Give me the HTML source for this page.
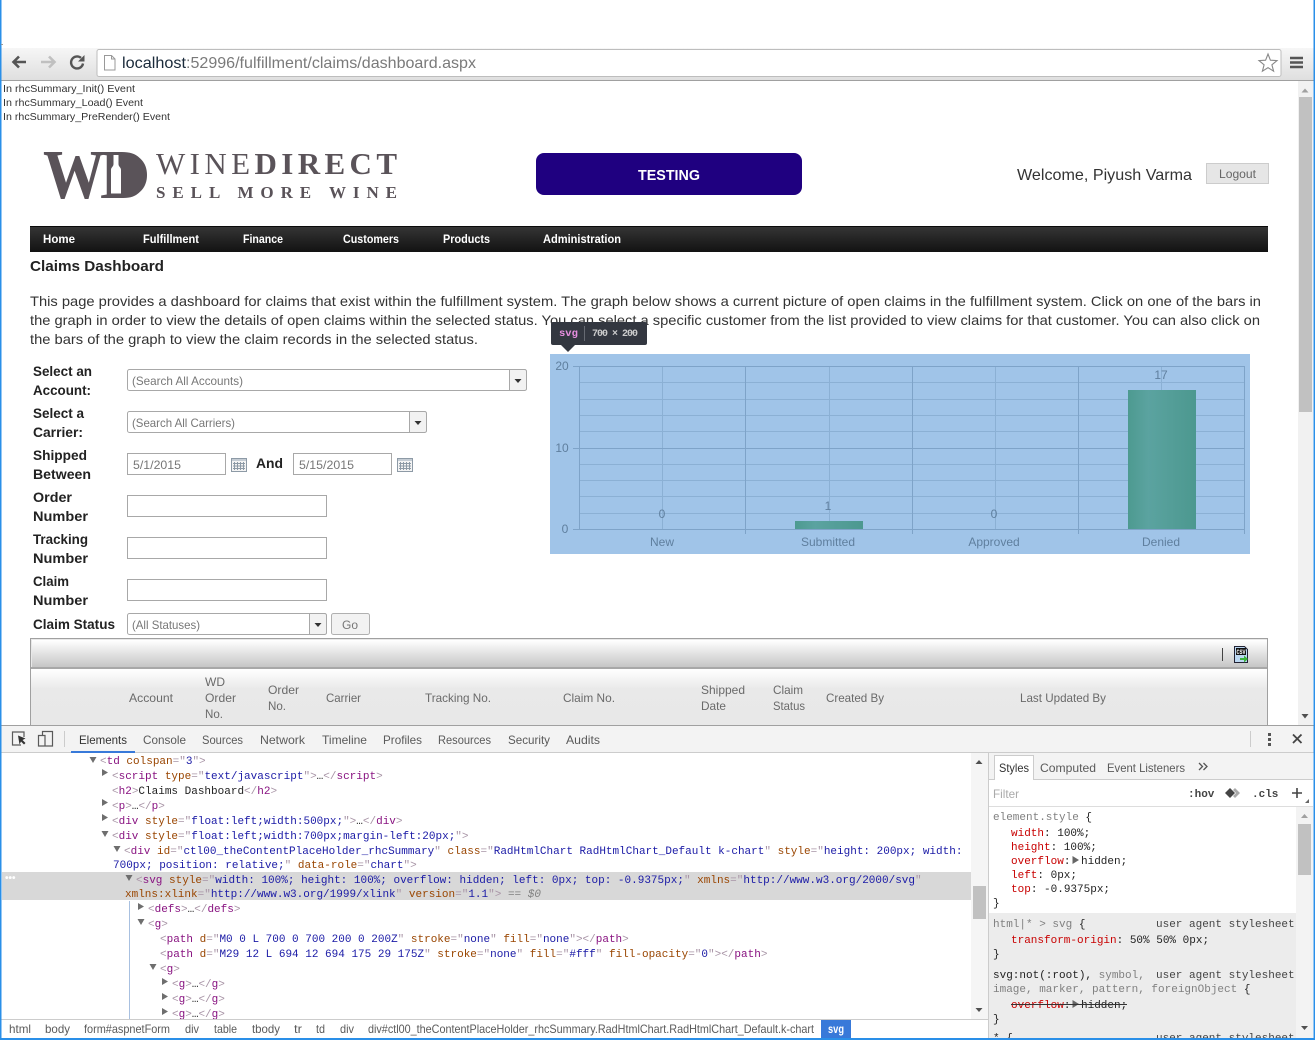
<!DOCTYPE html>
<html lang="en">
<head>
<meta charset="utf-8">
<title>Claims Dashboard</title>
<style>
html,body{margin:0;padding:0;width:1315px;height:1040px;overflow:hidden;background:#fff}
svg{display:block;position:absolute;left:0;top:0}
text{font-family:"Liberation Sans",sans-serif;white-space:pre}
.log{font-size:10.5px;fill:#333}
.nav{font-size:12px;fill:#fff;font-weight:bold;stroke:none}
.p{font-size:14px;fill:#333}
.lb{font-size:14px;font-weight:bold;fill:#222}
.v{font-size:12px;fill:#777}
.h{font-size:12px;fill:#6a6a6a}
.c{font-size:12px;fill:#5f7f9e;text-anchor:middle}
.t{font-size:12px;fill:#5a5a5a}
.m{font-family:"Liberation Mono",monospace;font-size:11px;fill:#222}
.br{fill:#a894a6}.tg{fill:#881280}.at{fill:#994500}.va{fill:#1a1aa6}
.pr{fill:#c80000}.gy{fill:#808080}
</style>
</head>
<body>
<svg width="1315" height="1040" viewBox="0 0 1315 1040" xmlns="http://www.w3.org/2000/svg">
<defs>
<linearGradient id="tb" x1="0" y1="0" x2="0" y2="1"><stop offset="0" stop-color="#f6f6f6"/><stop offset="1" stop-color="#dfdfdf"/></linearGradient>
<linearGradient id="nv" x1="0" y1="0" x2="0" y2="1"><stop offset="0" stop-color="#363636"/><stop offset="1" stop-color="#121212"/></linearGradient>
<linearGradient id="gt" x1="0" y1="0" x2="0" y2="1"><stop offset="0" stop-color="#fff"/><stop offset="1" stop-color="#c6c6c6"/></linearGradient>
<linearGradient id="gh" x1="0" y1="0" x2="0" y2="1"><stop offset="0" stop-color="#fff"/><stop offset=".35" stop-color="#e9e9e9"/><stop offset="1" stop-color="#e8e8e8"/></linearGradient>
<linearGradient id="bar" x1="0" y1="0" x2="1" y2="0"><stop offset="0" stop-color="#4d9a90"/><stop offset=".3" stop-color="#5ba3a0"/><stop offset="1" stop-color="#4c988f"/></linearGradient>
<g id="cal"><rect x=".5" y=".5" width="15" height="13" fill="#f4f4f4" stroke="#8d9aa6"/><rect x="1" y="1" width="14" height="2" fill="#c4ccd4"/><path d="M3.5 4v8M6.5 4v8M9.5 4v8M12.5 4v8M2 5.5h12M2 8h12M2 10.5h12" stroke="#8d9aa6" stroke-width="1" fill="none"/></g>
</defs>

<!-- browser chrome -->
<rect x="0" y="48" width="1315" height="32" fill="url(#tb)"/>
<rect x="0" y="80" width="1315" height="1" fill="#a0a0a0"/>
<rect x="97" y="49.5" width="1184" height="27" rx="2" fill="#fff" stroke="#bdbdbd"/>
<path d="M26 62H14M19 56.5L13.5 62l5.5 5.5" fill="none" stroke="#555" stroke-width="2.6"/>
<path d="M41 62H54M49 56.5l5.5 5.5-5.5 5.5" fill="none" stroke="#c0c0c0" stroke-width="2.6"/>
<path d="M83 63.5a6 6 0 1 1-2-5.6" fill="none" stroke="#555" stroke-width="2.4"/><path d="M84.5 55v6.5H78z" fill="#555"/>
<path d="M104.5 55.5h7l3.5 3.5v11h-10.500zM111.500 55.500v3.500h3.500" fill="#fff" stroke="#999"/>
<text x="122" y="68" font-size="16" textLength="64" lengthAdjust="spacingAndGlyphs" fill="#1a2a3a">localhost</text>
<text x="186" y="68" font-size="16" textLength="290" lengthAdjust="spacingAndGlyphs" fill="#7a7a7a">:52996/fulfillment/claims/dashboard.aspx</text>
<path d="M1268 54l2.400 6.200 6.600.4-5.100 4.200 1.700 6.400-5.600-3.600-5.600 3.600 1.700-6.400-5.100-4.200 6.600-.4z" fill="#fff" stroke="#888" stroke-width="1.100"/>
<path d="M1290 58h13M1290 62.500h13M1290 67h13" stroke="#555" stroke-width="2.400"/>

<!-- debug log -->
<text class="log" x="3" y="92" textLength="132" lengthAdjust="spacingAndGlyphs">In rhcSummary_Init() Event</text>
<text class="log" x="3" y="106" textLength="140" lengthAdjust="spacingAndGlyphs">In rhcSummary_Load() Event</text>
<text class="log" x="3" y="120" textLength="167" lengthAdjust="spacingAndGlyphs">In rhcSummary_PreRender() Event</text>

<!-- logo -->
<text x="43" y="198" font-size="70" textLength="62" lengthAdjust="spacingAndGlyphs" fill="#5a5359" style="font-family:'Liberation Serif',serif;font-weight:bold">W</text>
<text x="100" y="198" font-size="70" textLength="48" lengthAdjust="spacingAndGlyphs" fill="#5a5359" style="font-family:'Liberation Serif',serif;font-weight:bold">D</text>
<path d="M108 152.500h14c16 0 25 9 25 22.500s-9 22.500-25 22.500h-14z" fill="#5a5359"/>
<path d="M113.500 155h5v9c0 3 2.500 3 2.500 6v23.500h-10V170c0-3 2.500-3 2.500-6z" fill="#fff"/>
<text x="156" y="174" font-size="31" textLength="241" lengthAdjust="spacing" fill="#5a5359" style="font-family:'Liberation Serif',serif">WINE<tspan font-weight="bold">DIRECT</tspan></text>
<text x="156" y="198" font-size="17" font-weight="bold" textLength="241" lengthAdjust="spacing" fill="#5a5359" style="font-family:'Liberation Serif',serif">SELL MORE WINE</text>

<!-- header -->
<rect x="536" y="153" width="266" height="42" rx="8" fill="#1f0080"/>
<text x="638" y="180" font-size="15" font-weight="bold" fill="#fff" textLength="62" lengthAdjust="spacingAndGlyphs">TESTING</text>
<text x="1017" y="180" font-size="16" fill="#333" textLength="175" lengthAdjust="spacingAndGlyphs">Welcome, Piyush Varma</text>
<rect x="1206.500" y="163.500" width="62" height="20" fill="#e6e6e6" stroke="#ccc"/>
<text x="1219" y="178" font-size="12" fill="#666" textLength="37" lengthAdjust="spacingAndGlyphs">Logout</text>

<!-- nav -->
<rect x="30" y="226" width="1238" height="26" fill="url(#nv)"/>
<rect x="30" y="226" width="1238" height="1" fill="#0a0a0a"/>
<g>
<text class="nav" x="43" y="243" textLength="32" lengthAdjust="spacingAndGlyphs">Home</text>
<text class="nav" x="143" y="243" textLength="56" lengthAdjust="spacingAndGlyphs">Fulfillment</text>
<text class="nav" x="243" y="243" textLength="40" lengthAdjust="spacingAndGlyphs">Finance</text>
<text class="nav" x="343" y="243" textLength="56" lengthAdjust="spacingAndGlyphs">Customers</text>
<text class="nav" x="443" y="243" textLength="47" lengthAdjust="spacingAndGlyphs">Products</text>
<text class="nav" x="543" y="243" textLength="78" lengthAdjust="spacingAndGlyphs">Administration</text>
</g>

<!-- intro -->
<text x="30" y="271" font-size="15" font-weight="bold" fill="#222" textLength="134" lengthAdjust="spacingAndGlyphs">Claims Dashboard</text>
<text class="p" x="30" y="306" textLength="1231" lengthAdjust="spacingAndGlyphs">This page provides a dashboard for claims that exist within the fulfillment system. The graph below shows a current picture of open claims in the fulfillment system. Click on one of the bars in</text>
<text class="p" x="30" y="325" textLength="1230" lengthAdjust="spacingAndGlyphs">the graph in order to view the details of open claims within the selected status. You can select a specific customer from the list provided to view claims for that customer. You can also click on</text>
<text class="p" x="30" y="344" textLength="448" lengthAdjust="spacingAndGlyphs">the bars of the graph to view the claim records in the selected status.</text>

<!-- form labels -->
<g>
<text class="lb" x="33" y="376" textLength="59" lengthAdjust="spacingAndGlyphs">Select an</text>
<text class="lb" x="33" y="395" textLength="58" lengthAdjust="spacingAndGlyphs">Account:</text>
<text class="lb" x="33" y="418" textLength="51" lengthAdjust="spacingAndGlyphs">Select a</text>
<text class="lb" x="33" y="437" textLength="50" lengthAdjust="spacingAndGlyphs">Carrier:</text>
<text class="lb" x="33" y="460" textLength="54" lengthAdjust="spacingAndGlyphs">Shipped</text>
<text class="lb" x="33" y="479" textLength="58" lengthAdjust="spacingAndGlyphs">Between</text>
<text class="lb" x="33" y="502" textLength="39" lengthAdjust="spacingAndGlyphs">Order</text>
<text class="lb" x="33" y="521" textLength="55" lengthAdjust="spacingAndGlyphs">Number</text>
<text class="lb" x="33" y="544" textLength="55" lengthAdjust="spacingAndGlyphs">Tracking</text>
<text class="lb" x="33" y="563" textLength="55" lengthAdjust="spacingAndGlyphs">Number</text>
<text class="lb" x="33" y="586" textLength="36" lengthAdjust="spacingAndGlyphs">Claim</text>
<text class="lb" x="33" y="605" textLength="55" lengthAdjust="spacingAndGlyphs">Number</text>
<text class="lb" x="33" y="629" textLength="82" lengthAdjust="spacingAndGlyphs">Claim Status</text>
<text class="lb" x="256" y="468" textLength="27" lengthAdjust="spacingAndGlyphs">And</text>
</g>

<!-- combos -->
<g fill="#fff" stroke="#a8a8a8">
<rect x="127.500" y="369.500" width="399" height="21" rx="2"/>
<rect x="127.500" y="411.500" width="299" height="21" rx="2"/>
<rect x="127.500" y="613.500" width="199" height="21" rx="2"/>
</g>
<g fill="#f2f2f2" stroke="#a8a8a8">
<path d="M509.500 369.500h15a2 2 0 0 1 2 2v17a2 2 0 0 1-2 2h-15z"/>
<path d="M409.500 411.500h15a2 2 0 0 1 2 2v17a2 2 0 0 1-2 2h-15z"/>
<path d="M309.500 613.500h15a2 2 0 0 1 2 2v17a2 2 0 0 1-2 2h-15z"/>
</g>
<path d="M514.500 379h7l-3.500 4zM414.500 421h7l-3.500 4zM314.500 623h7l-3.500 4z" fill="#333"/>
<text class="v" x="132" y="385" textLength="111" lengthAdjust="spacingAndGlyphs">(Search All Accounts)</text>
<text class="v" x="132" y="427" textLength="103" lengthAdjust="spacingAndGlyphs">(Search All Carriers)</text>
<text class="v" x="132" y="629" textLength="68" lengthAdjust="spacingAndGlyphs">(All Statuses)</text>
<rect x="331.500" y="613.500" width="38" height="21" rx="2" fill="#f2f2f2" stroke="#b0b0b0"/>
<text class="v" x="342" y="629" textLength="16" lengthAdjust="spacingAndGlyphs">Go</text>

<!-- text inputs -->
<g fill="#fff" stroke="#a8a8a8">
<rect x="127.500" y="453.500" width="98" height="21"/>
<rect x="293.500" y="453.500" width="98" height="21"/>
<rect x="127.500" y="495.500" width="199" height="21"/>
<rect x="127.500" y="537.500" width="199" height="21"/>
<rect x="127.500" y="579.500" width="199" height="21"/>
</g>
<use href="#cal" x="231" y="458"/><use href="#cal" x="397" y="458"/>
<text class="v" x="133" y="469" textLength="48" lengthAdjust="spacingAndGlyphs">5/1/2015</text>
<text class="v" x="299" y="469" textLength="55" lengthAdjust="spacingAndGlyphs">5/15/2015</text>

<!-- chart -->
<rect x="550" y="354" width="700" height="200" fill="#a0c4e8"/>
<g fill="none" stroke="#8bb0d4">
<path d="M579 382.500h665M579 399.500h665M579 415.500h665M579 431.500h665M579 464.500h665M579 480.500h665M579 496.500h665M579 513.500h665"/>
<path d="M662.500 366v163M829.500 366v163M995.500 366v163M1161.500 366v163"/>
</g>
<g fill="none" stroke="#7ea3c8">
<path d="M573 366.500h671M573 448.500h671M573 529.500h671"/>
<path d="M579.500 366v163M745.500 366v168M912.500 366v168M1078.500 366v168M1244.500 366v168"/>
</g>
<rect x="795" y="521" width="68" height="8" fill="url(#bar)"/>
<rect x="1128" y="390" width="68" height="139" fill="url(#bar)"/>
<g>
<text class="c" x="562" y="370">20</text>
<text class="c" x="562" y="452">10</text>
<text class="c" x="565" y="533">0</text>
<text class="c" x="662" y="518">0</text>
<text class="c" x="828" y="510">1</text>
<text class="c" x="994" y="518">0</text>
<text class="c" x="1161" y="379">17</text>
<text class="c" x="662" y="546">New</text>
<text class="c" x="828" y="546">Submitted</text>
<text class="c" x="994" y="546">Approved</text>
<text class="c" x="1161" y="546">Denied</text>
</g>

<!-- inspector tooltip -->
<rect x="551" y="322" width="96" height="23" rx="2" fill="#333740"/>
<path d="M561 345h14l-7 7z" fill="#333740"/>
<text x="559" y="336" font-size="10.500" font-weight="bold" fill="#e88ee0" style="font-family:'Liberation Mono',monospace">svg</text>
<rect x="584" y="326" width="1" height="15" fill="#666a72"/>
<text x="592" y="336" font-size="10" font-weight="bold" fill="#cccccc" textLength="46" style="font-family:'Liberation Mono',monospace">700 × 200</text>

<!-- grid -->
<rect x="30.500" y="638.500" width="1237" height="90" fill="#e8e8e8" stroke="#a0a0a0"/>
<rect x="32" y="640" width="1235" height="27" fill="url(#gt)"/>
<rect x="31" y="667" width="1236" height="2" fill="#a8a8a8"/>
<rect x="31" y="669" width="1236" height="57" fill="url(#gh)"/>
<rect x="1222" y="648" width="1" height="13" fill="#444"/>
<path d="M1234.500 646.500h10l3 3v13h-13z" fill="#bcd8f2" stroke="#223"/>
<rect x="1236" y="648" width="10" height="7" fill="#111"/>
<text x="1236.500" y="654" font-size="6" font-weight="bold" fill="#fff" textLength="9" lengthAdjust="spacingAndGlyphs" style="font-family:'Liberation Mono',monospace">CSV</text>
<path d="M1240 658h4v-2.500l4 3.500-4 3.500V660h-4z" fill="#3cb33c"/>
<g>
<text class="h" x="129" y="702" textLength="44" lengthAdjust="spacingAndGlyphs">Account</text>
<text class="h" x="205" y="686" textLength="20" lengthAdjust="spacingAndGlyphs">WD</text>
<text class="h" x="205" y="702" textLength="31" lengthAdjust="spacingAndGlyphs">Order</text>
<text class="h" x="205" y="718" textLength="18" lengthAdjust="spacingAndGlyphs">No.</text>
<text class="h" x="268" y="694" textLength="31" lengthAdjust="spacingAndGlyphs">Order</text>
<text class="h" x="268" y="710" textLength="18" lengthAdjust="spacingAndGlyphs">No.</text>
<text class="h" x="326" y="702" textLength="35" lengthAdjust="spacingAndGlyphs">Carrier</text>
<text class="h" x="425" y="702" textLength="66" lengthAdjust="spacingAndGlyphs">Tracking No.</text>
<text class="h" x="563" y="702" textLength="52" lengthAdjust="spacingAndGlyphs">Claim No.</text>
<text class="h" x="701" y="694" textLength="44" lengthAdjust="spacingAndGlyphs">Shipped</text>
<text class="h" x="701" y="710" textLength="25" lengthAdjust="spacingAndGlyphs">Date</text>
<text class="h" x="773" y="694" textLength="30" lengthAdjust="spacingAndGlyphs">Claim</text>
<text class="h" x="773" y="710" textLength="32" lengthAdjust="spacingAndGlyphs">Status</text>
<text class="h" x="826" y="702" textLength="58" lengthAdjust="spacingAndGlyphs">Created By</text>
<text class="h" x="1020" y="702" textLength="86" lengthAdjust="spacingAndGlyphs">Last Updated By</text>
</g>

<!-- page scrollbar -->
<rect x="1298" y="81" width="15" height="644" fill="#f1f1f1"/>
<rect x="1299" y="97" width="13" height="315" fill="#c1c1c1"/>
<path d="M1301.500 92.500h7l-3.500-4z" fill="#a0a0a0"/>
<path d="M1301.500 714h7l-3.500 4.500z" fill="#505050"/>

<!-- devtools -->
<rect x="0" y="725" width="1315" height="315" fill="#fff"/>
<rect x="0" y="726" width="1315" height="27" fill="#f3f3f3"/>
<rect x="0" y="725" width="1315" height="1" fill="#a0a0a0"/>
<rect x="0" y="752" width="1315" height="1" fill="#cccccc"/>
<path d="M21 745h-8.500v-13H24V737" fill="none" stroke="#5a5a5a" stroke-width="1.200"/>
<path d="M18 735.500l7.500 3-3 1.500 3 3-1.500 1.500-3-3-1.500 3z" fill="#333"/>
<path d="M42.500 735v-3.500h10v14.500h-7.500M38.500 735.500h6.500v10.500h-6.500z" fill="none" stroke="#5a5a5a" stroke-width="1.200"/>
<rect x="64" y="731" width="1" height="16" fill="#ccc"/>
<rect x="71" y="751" width="64" height="2" fill="#3879d9"/>
<g>
<text class="t" x="79" y="744" style="fill:#333" textLength="48" lengthAdjust="spacingAndGlyphs">Elements</text>
<text class="t" x="143" y="744" textLength="43" lengthAdjust="spacingAndGlyphs">Console</text>
<text class="t" x="202" y="744" textLength="41" lengthAdjust="spacingAndGlyphs">Sources</text>
<text class="t" x="260" y="744" textLength="45" lengthAdjust="spacingAndGlyphs">Network</text>
<text class="t" x="322" y="744" textLength="45" lengthAdjust="spacingAndGlyphs">Timeline</text>
<text class="t" x="383" y="744" textLength="39" lengthAdjust="spacingAndGlyphs">Profiles</text>
<text class="t" x="438" y="744" textLength="53" lengthAdjust="spacingAndGlyphs">Resources</text>
<text class="t" x="508" y="744" textLength="42" lengthAdjust="spacingAndGlyphs">Security</text>
<text class="t" x="566" y="744" textLength="34" lengthAdjust="spacingAndGlyphs">Audits</text>
</g>
<rect x="1250" y="731" width="1" height="16" fill="#ccc"/>
<path d="M1268 733h3v3h-3zM1268 738h3v3h-3zM1268 743h3v3h-3z" fill="#555"/>
<path d="M1293 734.500l8.500 8.500M1301.500 734.500l-8.500 8.500" stroke="#444" stroke-width="1.800"/>

<!-- DOM tree -->
<rect x="2" y="872" width="969" height="28" fill="#d8d8d8"/>
<rect x="129" y="901" width="1" height="118" fill="#a8c0e0"/>
<text x="5" y="881" font-size="10" fill="#fff" font-weight="bold">•••</text>
<path d="M89.500 757h7l-3.500 6zM102 769v7l6-3.500zM102 799v7l6-3.500zM102 814v7l6-3.500zM101.500 831h7l-3.500 6zM113.500 846h7l-3.500 6zM125.500 875h7l-3.500 6zM138 903v7l6-3.500zM137.500 919h7l-3.500 6zM149.500 964h7l-3.500 6zM162 978v7l6-3.500zM162 993v7l6-3.500zM162 1008v7l6-3.500z" fill="#6e6e6e"/>
<g>
<text class="m" x="100" y="764"><tspan class="br">&lt;</tspan><tspan class="tg">td</tspan> <tspan class="at">colspan</tspan><tspan class="br">="</tspan><tspan class="va">3</tspan><tspan class="br">"&gt;</tspan></text>
<text class="m" x="112" y="779"><tspan class="br">&lt;</tspan><tspan class="tg">script</tspan> <tspan class="at">type</tspan><tspan class="br">="</tspan><tspan class="va">text/javascript</tspan><tspan class="br">"&gt;</tspan>…<tspan class="br">&lt;/</tspan><tspan class="tg">script</tspan><tspan class="br">&gt;</tspan></text>
<text class="m" x="112" y="794"><tspan class="br">&lt;</tspan><tspan class="tg">h2</tspan><tspan class="br">&gt;</tspan>Claims Dashboard<tspan class="br">&lt;/</tspan><tspan class="tg">h2</tspan><tspan class="br">&gt;</tspan></text>
<text class="m" x="112" y="809"><tspan class="br">&lt;</tspan><tspan class="tg">p</tspan><tspan class="br">&gt;</tspan>…<tspan class="br">&lt;/</tspan><tspan class="tg">p</tspan><tspan class="br">&gt;</tspan></text>
<text class="m" x="112" y="824"><tspan class="br">&lt;</tspan><tspan class="tg">div</tspan> <tspan class="at">style</tspan><tspan class="br">="</tspan><tspan class="va">float:left;width:500px;</tspan><tspan class="br">"&gt;</tspan>…<tspan class="br">&lt;/</tspan><tspan class="tg">div</tspan><tspan class="br">&gt;</tspan></text>
<text class="m" x="112" y="839"><tspan class="br">&lt;</tspan><tspan class="tg">div</tspan> <tspan class="at">style</tspan><tspan class="br">="</tspan><tspan class="va">float:left;width:700px;margin-left:20px;</tspan><tspan class="br">"&gt;</tspan></text>
<text class="m" x="124" y="854"><tspan class="br">&lt;</tspan><tspan class="tg">div</tspan> <tspan class="at">id</tspan><tspan class="br">="</tspan><tspan class="va">ctl00_theContentPlaceHolder_rhcSummary</tspan><tspan class="br">"</tspan> <tspan class="at">class</tspan><tspan class="br">="</tspan><tspan class="va">RadHtmlChart RadHtmlChart_Default k-chart</tspan><tspan class="br">"</tspan> <tspan class="at">style</tspan><tspan class="br">="</tspan><tspan class="va">height: 200px; width:</tspan></text>
<text class="m" x="113" y="868"><tspan class="va">700px; position: relative;</tspan><tspan class="br">"</tspan> <tspan class="at">data-role</tspan><tspan class="br">="</tspan><tspan class="va">chart</tspan><tspan class="br">"&gt;</tspan></text>
<text class="m" x="136" y="883"><tspan class="br">&lt;</tspan><tspan class="tg">svg</tspan> <tspan class="at">style</tspan><tspan class="br">="</tspan><tspan class="va">width: 100%; height: 100%; overflow: hidden; left: 0px; top: -0.9375px;</tspan><tspan class="br">"</tspan> <tspan class="at">xmlns</tspan><tspan class="br">="</tspan><tspan class="va">http://www.w3.org/2000/svg</tspan><tspan class="br">"</tspan></text>
<text class="m" x="125" y="897"><tspan class="at">xmlns:xlink</tspan><tspan class="br">="</tspan><tspan class="va">http://www.w3.org/1999/xlink</tspan><tspan class="br">"</tspan> <tspan class="at">version</tspan><tspan class="br">="</tspan><tspan class="va">1.1</tspan><tspan class="br">"&gt;</tspan> <tspan class="gy" font-style="italic">== $0</tspan></text>
<text class="m" x="148" y="912"><tspan class="br">&lt;</tspan><tspan class="tg">defs</tspan><tspan class="br">&gt;</tspan>…<tspan class="br">&lt;/</tspan><tspan class="tg">defs</tspan><tspan class="br">&gt;</tspan></text>
<text class="m" x="148" y="927"><tspan class="br">&lt;</tspan><tspan class="tg">g</tspan><tspan class="br">&gt;</tspan></text>
<text class="m" x="160" y="942"><tspan class="br">&lt;</tspan><tspan class="tg">path</tspan> <tspan class="at">d</tspan><tspan class="br">="</tspan><tspan class="va">M0 0 L 700 0 700 200 0 200Z</tspan><tspan class="br">"</tspan> <tspan class="at">stroke</tspan><tspan class="br">="</tspan><tspan class="va">none</tspan><tspan class="br">"</tspan> <tspan class="at">fill</tspan><tspan class="br">="</tspan><tspan class="va">none</tspan><tspan class="br">"&gt;&lt;/</tspan><tspan class="tg">path</tspan><tspan class="br">&gt;</tspan></text>
<text class="m" x="160" y="957"><tspan class="br">&lt;</tspan><tspan class="tg">path</tspan> <tspan class="at">d</tspan><tspan class="br">="</tspan><tspan class="va">M29 12 L 694 12 694 175 29 175Z</tspan><tspan class="br">"</tspan> <tspan class="at">stroke</tspan><tspan class="br">="</tspan><tspan class="va">none</tspan><tspan class="br">"</tspan> <tspan class="at">fill</tspan><tspan class="br">="</tspan><tspan class="va">#fff</tspan><tspan class="br">"</tspan> <tspan class="at">fill-opacity</tspan><tspan class="br">="</tspan><tspan class="va">0</tspan><tspan class="br">"&gt;&lt;/</tspan><tspan class="tg">path</tspan><tspan class="br">&gt;</tspan></text>
<text class="m" x="160" y="972"><tspan class="br">&lt;</tspan><tspan class="tg">g</tspan><tspan class="br">&gt;</tspan></text>
<text class="m" x="172" y="987"><tspan class="br">&lt;</tspan><tspan class="tg">g</tspan><tspan class="br">&gt;</tspan>…<tspan class="br">&lt;/</tspan><tspan class="tg">g</tspan><tspan class="br">&gt;</tspan></text>
<text class="m" x="172" y="1002"><tspan class="br">&lt;</tspan><tspan class="tg">g</tspan><tspan class="br">&gt;</tspan>…<tspan class="br">&lt;/</tspan><tspan class="tg">g</tspan><tspan class="br">&gt;</tspan></text>
<text class="m" x="172" y="1017"><tspan class="br">&lt;</tspan><tspan class="tg">g</tspan><tspan class="br">&gt;</tspan>…<tspan class="br">&lt;/</tspan><tspan class="tg">g</tspan><tspan class="br">&gt;</tspan></text>
</g>

<!-- DOM scrollbar -->
<rect x="971" y="753" width="17" height="266" fill="#f5f5f5"/>
<rect x="973" y="886" width="13" height="33" fill="#c1c1c1"/>
<path d="M975.500 764h7l-3.500-4zM975.500 1008h7l-3.500 4z" fill="#505050"/>
<rect x="988" y="753" width="1" height="285" fill="#cccccc"/>

<!-- breadcrumbs -->
<rect x="0" y="1019" width="988" height="1" fill="#cccccc"/>
<g>
<text class="t" x="9" y="1033" textLength="22" lengthAdjust="spacingAndGlyphs">html</text>
<text class="t" x="45" y="1033" textLength="25" lengthAdjust="spacingAndGlyphs">body</text>
<text class="t" x="84" y="1033" textLength="86" lengthAdjust="spacingAndGlyphs">form#aspnetForm</text>
<text class="t" x="185" y="1033" textLength="14" lengthAdjust="spacingAndGlyphs">div</text>
<text class="t" x="214" y="1033" textLength="23" lengthAdjust="spacingAndGlyphs">table</text>
<text class="t" x="252" y="1033" textLength="28" lengthAdjust="spacingAndGlyphs">tbody</text>
<text class="t" x="294" y="1033" textLength="8" lengthAdjust="spacingAndGlyphs">tr</text>
<text class="t" x="316" y="1033" textLength="9" lengthAdjust="spacingAndGlyphs">td</text>
<text class="t" x="340" y="1033" textLength="14" lengthAdjust="spacingAndGlyphs">div</text>
<text class="t" x="368" y="1033" textLength="446" lengthAdjust="spacingAndGlyphs">div#ctl00_theContentPlaceHolder_rhcSummary.RadHtmlChart.RadHtmlChart_Default.k-chart</text>
</g>
<rect x="821" y="1020" width="30" height="18" fill="#3879d9"/>
<text x="828" y="1033" font-size="12" font-weight="bold" fill="#fff" textLength="16" lengthAdjust="spacingAndGlyphs">svg</text>

<!-- styles pane -->
<rect x="989" y="753" width="324" height="26" fill="#f3f3f3"/>
<rect x="989" y="779" width="324" height="1" fill="#cccccc"/>
<rect x="994.500" y="755.500" width="39" height="24" fill="#fff" stroke="#ccc"/>
<rect x="995" y="778" width="38" height="2" fill="#fff"/>
<text class="t" x="999" y="772" style="fill:#333" textLength="30" lengthAdjust="spacingAndGlyphs">Styles</text>
<text class="t" x="1040" y="772" textLength="56" lengthAdjust="spacingAndGlyphs">Computed</text>
<text class="t" x="1107" y="772" textLength="78" lengthAdjust="spacingAndGlyphs">Event Listeners</text>
<path d="M1199 763l3.500 3.500-3.500 3.500M1203.500 763l3.500 3.500-3.500 3.500" fill="none" stroke="#555" stroke-width="1.300"/>
<rect x="989" y="806" width="324" height="1" fill="#dddddd"/>
<text x="993" y="798" font-size="12" fill="#aaa" textLength="26" lengthAdjust="spacingAndGlyphs">Filter</text>
<text class="m" x="1188" y="797" font-weight="bold" style="fill:#444">:hov</text>
<path d="M1225 793l5-5 5 5-5 5z" fill="#444"/><path d="M1235 788l5 5-5 5-2-2 3-3-3-3z" fill="#aaa"/>
<text class="m" x="1252" y="797" font-weight="bold" style="fill:#444">.cls</text>
<path d="M1292 793h10M1297 788v10" stroke="#444" stroke-width="1.600"/>
<path d="M1309 803v-4l-4 4z" fill="#666"/>

<rect x="989" y="913" width="307" height="125" fill="#ececec"/>
<g>
<text class="m" x="993" y="820"><tspan class="gy">element.style</tspan> {</text>
<text class="m" x="1011" y="836"><tspan class="pr">width</tspan>: 100%;</text>
<text class="m" x="1011" y="850"><tspan class="pr">height</tspan>: 100%;</text>
<text class="m" x="1011" y="864"><tspan class="pr">overflow</tspan>:<tspan x="1081">hidden;</tspan></text>
<text class="m" x="1011" y="878"><tspan class="pr">left</tspan>: 0px;</text>
<text class="m" x="1011" y="892"><tspan class="pr">top</tspan>: -0.9375px;</text>
<text class="m" x="993" y="906">}</text>
<text class="m" x="993" y="927"><tspan class="gy">html|* &gt; svg</tspan> {</text>
<text class="m" x="1156" y="927" style="fill:#444">user agent stylesheet</text>
<text class="m" x="1011" y="943"><tspan class="pr">transform-origin</tspan>: 50% 50% 0px;</text>
<text class="m" x="993" y="957">}</text>
<text class="m" x="993" y="978">svg:not(:root), <tspan class="gy">symbol,</tspan></text>
<text class="m" x="1156" y="978" style="fill:#444">user agent stylesheet</text>
<text class="m" x="993" y="992"><tspan class="gy">image, marker, pattern, foreignObject</tspan> {</text>
<text class="m" x="1011" y="1008"><tspan class="pr">overflow</tspan>:<tspan x="1081">hidden;</tspan></text>
<text class="m" x="993" y="1022">}</text>
<text class="m" x="993" y="1041">* {</text>
<text class="m" x="1156" y="1041" style="fill:#444">user agent stylesheet</text>
</g>
<path d="M1072.500 856v8l6.500-4zM1072.500 1000v8l6.500-4z" fill="#666"/>
<rect x="1011" y="1004" width="116" height="1" fill="#333"/>
<rect x="1296" y="807" width="17" height="231" fill="#f3f3f3"/>
<rect x="1298" y="824" width="13" height="51" fill="#c1c1c1"/>
<path d="M1301 818h7l-3.500-4z" fill="#a0a0a0"/>
<path d="M1301 1026h7l-3.500 4z" fill="#505050"/>

<!-- window edge -->
<rect x="0" y="0" width="1.500" height="1040" fill="#2a8fe8"/>
<rect x="1" y="44" width="2" height="1" fill="#999"/>
<rect x="1313.500" y="0" width="1.500" height="1040" fill="#2a8fe8"/>
<rect x="0" y="1038" width="1315" height="2" fill="#2a8fe8"/>
</svg>
</body>
</html>
